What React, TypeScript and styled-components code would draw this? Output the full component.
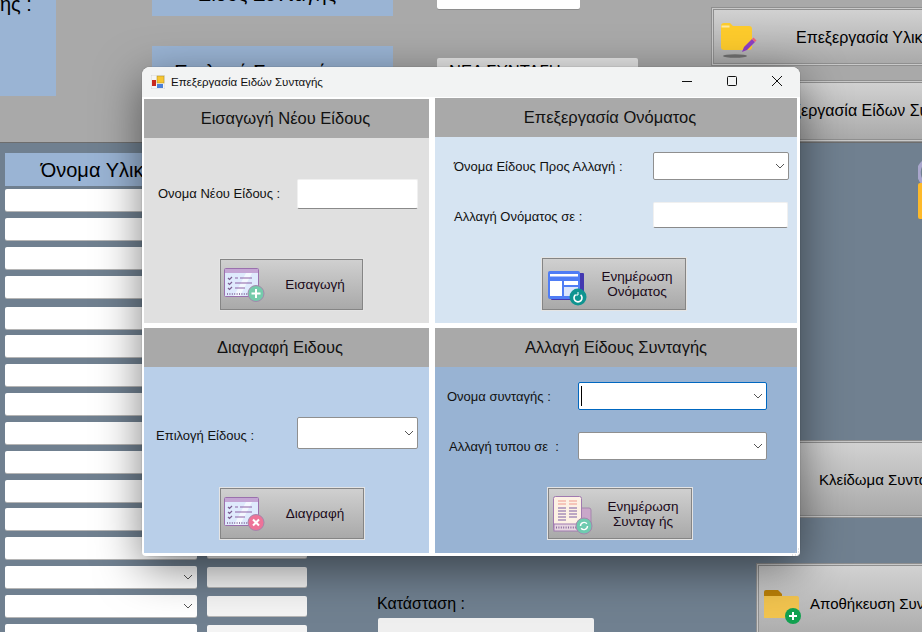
import React from 'react';
import styled, { createGlobalStyle } from 'styled-components';

const GlobalStyle = createGlobalStyle`
  * {
    box-sizing: border-box;
  }
  html,
  body {
    margin: 0;
    padding: 0;
    background: #708090;
    font-family: 'Liberation Sans', Arial, sans-serif;
    overflow: hidden;
  }
`;

const Page = styled.div`
  position: relative;
  width: 922px;
  height: 632px;
  overflow: hidden;
  background: #708090;
  color: #000;
`;

/* form behind the dialog */

const TopBand = styled.div`
  display: flex;
  height: 143px;
  background: #a9a9a9;
  border-bottom: 1px solid #6d6d6d;
`;

const NoteBlock = styled.div`
  flex: none;
  width: 56px;
  height: 96px;
  background: #9ab4d4;
  font-size: 20px;
  line-height: 23px;
  white-space: nowrap;
`;

const NoteText = styled.div`
  margin-top: -7px;
`;

const TitleColumn = styled.div`
  flex: none;
  display: flex;
  flex-direction: column;
  gap: 30px;
  width: 241px;
  margin-left: 96px;
`;

const TitleBlock = styled.div<{ $height: number; $pull: number }>`
  height: ${(p) => p.$height}px;
  padding-right: ${(p) => p.$pull}px;
  overflow: hidden;
  background: #9ab4d4;
  font-size: 20px;
  line-height: 23px;
  text-align: center;
`;

const TitleText = styled.div<{ $offset: number }>`
  margin-top: ${(p) => p.$offset}px;
`;

const InputColumn = styled.div`
  flex: none;
  display: flex;
  flex-direction: column;
  width: 201px;
  margin-left: 44px;
`;

const TopInput = styled.div`
  width: 143px;
  height: 9px;
  background: #fff;
  border-radius: 0 0 2px 2px;
  box-shadow: 0 1px 0 #8e8e8e;
`;

const TopSelect = styled.div`
  height: 30px;
  margin-top: 49px;
  padding: 3px 12px;
  font-size: 16.5px;
  line-height: 20px;
  white-space: nowrap;
  background: #e6e6e6;
  border-radius: 2px;
`;

const ButtonColumn = styled.div`
  flex: none;
  display: flex;
  flex-direction: column;
  gap: 16px;
  margin-left: 74px;
  padding-top: 8px;
`;

const FormButton = styled.div<{
  $width: number;
  $height: number;
  $indent: number;
  $size?: number;
  $textDrop?: number;
}>`
  flex: none;
  display: flex;
  align-items: center;
  position: relative;
  width: ${(p) => p.$width}px;
  height: ${(p) => p.$height}px;
  padding-left: ${(p) => p.$indent}px;
  padding-top: ${(p) => p.$textDrop ?? 0}px;
  font-size: ${(p) => p.$size ?? 15}px;
  white-space: nowrap;
  background: linear-gradient(#d2d2d2, #a9a9a9);
  border: 1px solid #c9c9c9;
  box-shadow: inset 0 0 0 1px #8f8f8f, 0 0 0 1px #8f8f8f;
`;

const FormButtonIcon = styled.svg<{ $left: number; $top: number }>`
  position: absolute;
  left: ${(p) => p.$left}px;
  top: ${(p) => p.$top}px;
`;

const LowerArea = styled.div`
  display: flex;
  height: 489px;
`;

const ListColumn = styled.div`
  flex: none;
  width: 307px;
  padding: 10px 0 0 5px;
`;

const ListHead = styled.div`
  display: flex;
  gap: 10px;
  height: 33px;
  margin-bottom: 3px;
`;

const HeadCell = styled.div<{ $width: number }>`
  width: ${(p) => p.$width}px;
  padding-left: 4px;
  background: #9ab4d4;
  font-size: 20px;
  line-height: 34px;
  text-align: center;
  white-space: nowrap;
  overflow: hidden;
`;

const ListRow = styled.div<{ $gap: number }>`
  display: flex;
  gap: 10px;
  height: 22px;
  margin-top: ${(p) => p.$gap}px;
`;

const NameField = styled.div`
  display: flex;
  align-items: center;
  justify-content: flex-end;
  width: 192px;
  padding-right: 4px;
  background: #fff;
  border-radius: 2px;
  box-shadow: 0 1px 0 #b5b5b5;
`;

const QuantityField = styled.div`
  width: 100px;
  height: 20px;
  margin-top: 1px;
  background: #f4f4f4;
  border-radius: 2px;
  box-shadow: 0 1px 0 #b5b5b5;
`;

const StatusColumn = styled.div`
  flex: none;
  width: 216px;
  margin-left: 71px;
  padding-top: 452px;
`;

const StatusLabel = styled.div`
  margin-left: -1px;
  font-size: 16px;
  line-height: 18px;
  white-space: nowrap;
`;

const StatusField = styled.div`
  height: 40px;
  margin-top: 5px;
  background: #efefef;
  border-radius: 2px 2px 0 0;
`;

const RightColumn = styled.div`
  flex: none;
  margin-left: 118px;
  padding-top: 18px;
`;

const LockIcon = styled.svg`
  display: block;
  margin-left: 206px;
`;

const SaveSpacer = styled.div`
  height: 47px;
`;

const ShiftedButton = styled.div`
  margin: 220px 0 0 0;
`;

const SaveButtonSlot = styled.div`
  margin-left: 45px;
`;

/* dialog */

const Dialog = styled.div`
  position: absolute;
  left: 142px;
  top: 67px;
  width: 658px;
  height: 489px;
  background: #fff;
  border-radius: 8px 8px 4px 4px;
  overflow: hidden;
`;

const DialogShadow = styled.div`
  position: absolute;
  left: 142px;
  top: 67px;
  width: 658px;
  height: 489px;
  border-radius: 8px;
  box-shadow: 0 12px 46px rgba(0, 0, 0, 0.5), 0 0 1px rgba(0, 0, 0, 0.5);
`;

const TitleBar = styled.div`
  display: flex;
  align-items: center;
  height: 30px;
  padding-left: 9px;
  background: #f2f3f3;
`;

const AppIcon = styled.svg`
  flex: none;
  margin-right: 6px;
`;

const WindowTitle = styled.div`
  flex: 1;
  font-size: 11.5px;
  color: #111;
`;

const WindowButton = styled.svg`
  flex: none;
  display: block;
`;

const WindowButtons = styled.div`
  display: flex;
  gap: 35px;
  margin-bottom: 2px;
  padding-right: 18px;
`;

const PanelGrid = styled.div`
  display: grid;
  grid-template-columns: 285px 362px;
  grid-template-rows: 225px 225px;
  column-gap: 6px;
  row-gap: 5px;
  padding: 1px 0 0 2px;
`;

const Panel = styled.section<{ $bg: string; $drop?: boolean }>`
  background: ${(p) => p.$bg};
  margin-top: ${(p) => (p.$drop ? 1 : 0)}px;
`;

const PanelTitle = styled.h2<{ $pull?: number }>`
  height: 39px;
  margin: 0;
  padding-right: ${(p) => p.$pull ?? 0}px;
  background: #a9a9a9;
  font-size: 16.5px;
  font-weight: 400;
  line-height: 39px;
  text-align: center;
  color: #111;
`;

const FieldRow = styled.div<{ $top: number; $left: number }>`
  display: flex;
  align-items: center;
  margin-top: ${(p) => p.$top}px;
  padding-left: ${(p) => p.$left}px;
`;

const FieldLabel = styled.label<{ $width: number; $shift?: number }>`
  flex: none;
  width: ${(p) => p.$width}px;
  margin-top: ${(p) => p.$shift ?? 0}px;
  font-size: 13px;
  color: #111;
  white-space: pre;
`;

const TextBox = styled.div<{ $width: number; $height: number }>`
  width: ${(p) => p.$width}px;
  height: ${(p) => p.$height}px;
  background: #fff;
  border: 1px solid #f0f0f0;
  border-bottom: 1px solid #8a8a8a;
  border-radius: 2px;
`;

const ComboBox = styled.div<{ $width: number; $height: number; $focused?: boolean }>`
  display: flex;
  align-items: center;
  justify-content: space-between;
  width: ${(p) => p.$width}px;
  height: ${(p) => p.$height}px;
  padding: 0 3px 0 2px;
  background: #fff;
  border: 1px solid ${(p) => (p.$focused ? '#0067c0' : '#8f8f8f')};
  border-radius: 2px;
`;

const Caret = styled.div`
  width: 1px;
  height: 20px;
  background: #000;
`;

const Chevron = styled.svg`
  display: block;
  margin-left: auto;
`;

const ActionButton = styled.button<{ $top: number; $left: number; $width?: number; $height?: number }>`
  display: grid;
  grid-template-columns: 44px 100px;
  align-items: center;
  width: ${(p) => p.$width ?? 144}px;
  height: ${(p) => p.$height ?? 51}px;
  margin: ${(p) => p.$top}px 0 0 ${(p) => p.$left}px;
  padding: 0;
  background: linear-gradient(#d0d0d0, #a9a9a9);
  border: 1px solid #858585;
  box-shadow: 0 0 0 1px #e4e4e4;
  font-family: inherit;
  font-size: 13.5px;
  line-height: 15px;
  color: #1a0a1a;
`;

const ActionIcon = styled.svg`
  display: block;
`;

const ActionText = styled.span`
  text-align: center;
  white-space: nowrap;
`;

const GripDots = styled.svg`
  position: absolute;
  right: 0;
  bottom: 0;
`;

const RowChevron = () => (
  <Chevron width="10" height="6" viewBox="0 0 10 6">
    <path d="M1 1l4 4 4-4" fill="none" stroke="#555" strokeWidth="1" />
  </Chevron>
);

const Checklist = ({ badge, cross }: { badge: string; cross?: boolean }) => (
  <ActionIcon width="44" height="49" viewBox="1 1 44 49">
    <rect x="4.5" y="9.5" width="34" height="28" rx="1" fill="#dfeafd" stroke="#9a70ad" />
    <path d="M14 37l12-23h6L20 37zM26 37l11-21" fill="#f4f8ff" stroke="none" />
    <rect x="5" y="10" width="33" height="4" fill="#c4a6d4" />
    <path d="M8 19l1.5 1.5L12 18M8 24l1.5 1.5L12 23M8 29l1.5 1.5L12 28" fill="none" stroke="#7d5f94" strokeWidth="1.2" />
    <path d="M15 19h3M20 19h12M15 24h17M15 29h10" stroke="#8d62a5" strokeWidth="1.2" />
    <path d="M7 35h24" stroke="#7d5f94" strokeDasharray="1 1.4" strokeWidth="1.4" />
    <circle cx="36" cy="34.5" r="8" fill={badge} stroke="#a487ac" />
    {cross ? (
      <path d="M33 31.5l6 6M39 31.5l-6 6" stroke="#fff" strokeWidth="2" />
    ) : (
      <path d="M36 30v9M31.5 34.5h9" stroke="#fff" strokeWidth="2" />
    )}
  </ActionIcon>
);

const LayoutRefresh = () => (
  <ActionIcon width="44" height="49" viewBox="1 1 44 49">
    <rect x="9" y="14" width="33" height="27" rx="1" fill="#4338b0" />
    <rect x="6" y="12" width="32" height="28" rx="2" fill="#4f7df5" />
    <rect x="8" y="15" width="28" height="2.5" fill="#fff" />
    <rect x="8" y="22" width="12" height="15" fill="#fff" />
    <rect x="22" y="22" width="14" height="4" fill="#fff" />
    <rect x="22" y="28" width="14" height="9" fill="#dbe5fb" />
    <circle cx="36" cy="38" r="8.5" fill="#0f9490" />
    <path d="M33.4 35.8a4 4 0 1 0 5.2 0" fill="none" stroke="#fff" strokeWidth="1.6" />
    <path d="M36 33v3h-3" fill="none" stroke="#fff" strokeWidth="1" />
  </ActionIcon>
);

const RecipeRefresh = () => (
  <ActionIcon width="44" height="49" viewBox="1 1 44 49">
    <rect x="32" y="20" width="11" height="23" rx="2" fill="#c9a7c9" stroke="#a487ac" />
    <rect x="5.5" y="8.5" width="28" height="34" rx="2" fill="#fdf1e4" stroke="#a07ab0" />
    <path d="M10 13h8M21 13h8M10 16h8M21 16h8" stroke="#ef9a8f" />
    <path d="M10 20h8M21 20h8M10 23h8M21 23h8M10 26h8M21 26h8M10 29h8M21 29h8M10 32h8" stroke="#7d5ea4" strokeWidth="1.2" />
    <rect x="6" y="36" width="27" height="7" fill="#e6d5e0" stroke="#a07ab0" />
    <path d="M8 39.5h22" stroke="#8a6a9e" strokeDasharray="1 1.4" strokeWidth="2" />
    <circle cx="36" cy="38" r="8" fill="#6fcbb0" stroke="#a487ac" />
    <path d="M32.5 38a3.6 3.6 0 0 1 6.4-2.2M39.5 38a3.6 3.6 0 0 1-6.4 2.2" fill="none" stroke="#fff" strokeWidth="1.4" />
  </ActionIcon>
);

const rowGaps = [0, 7, 7, 7, 9, 6, 7, 7, 7, 7, 7, 6, 7, 7, 7, 7];
const selectRows = [13, 14];

const App = () => {
  return (
    <Page>
      <GlobalStyle />
      <TopBand>
        <NoteBlock>
          <NoteText>ής :</NoteText>
        </NoteBlock>
        <TitleColumn>
          <TitleBlock $height={16} $pull={11}>
            <TitleText $offset={-17}>Είδος Συνταγής</TitleText>
          </TitleBlock>
          <TitleBlock $height={96} $pull={34}>
            <TitleText $offset={15}>Επιλογή Συνταγής</TitleText>
          </TitleBlock>
        </TitleColumn>
        <InputColumn>
          <TopInput />
          <TopSelect>ΝΕΑ ΣΥΝΤΑΓΗ</TopSelect>
        </InputColumn>
        <ButtonColumn>
          <FormButton $width={260} $height={57} $indent={83} $size={16} $textDrop={2}>
            <FormButtonIcon $left={5} $top={11} width="40" height="40" viewBox="0 0 40 40">
              <path d="M3 6a3 3 0 0 1 3-3h6l3 3h16a3 3 0 0 1 3 3v18a3 3 0 0 1-3 3H6a3 3 0 0 1-3-3z" fill="#fdcb2c" />
              <path d="M3.5 5.5h8v2h-8z" fill="#ffe9a0" />
              <path d="M24 32l2-5 8-8 3 3-8 8z" fill="#8d3fc4" />
              <path d="M34 19l1.5-1.5 3 3L37 22z" fill="#f0627a" />
              <ellipse cx="17" cy="36" rx="12" ry="1.8" fill="#6f6f6f" />
            </FormButtonIcon>
            Επεξεργασία Υλικών
          </FormButton>
          <FormButton $width={260} $height={60} $indent={52} $size={16}>
            Επεξεργασία Είδων Συνταγής
          </FormButton>
        </ButtonColumn>
      </TopBand>
      <LowerArea>
        <ListColumn>
          <ListHead>
            <HeadCell $width={192}>Όνομα Υλικού</HeadCell>
            <HeadCell $width={100} />
          </ListHead>
          {rowGaps.map((gap, index) => (
            <ListRow key={index} $gap={gap}>
              <NameField>{selectRows.includes(index) && <RowChevron />}</NameField>
              <QuantityField />
            </ListRow>
          ))}
        </ListColumn>
        <StatusColumn>
          <StatusLabel>Κατάσταση :</StatusLabel>
          <StatusField />
        </StatusColumn>
        <RightColumn>
          <LockIcon width="10" height="60" viewBox="0 0 10 60">
            <path d="M8 0C3 2 0 7 1 14c.6 4 3 7 5 9" fill="none" stroke="#a9a6cc" strokeWidth="4" />
            <rect x="0" y="22" width="24" height="36" rx="2" fill="#fdb92a" />
          </LockIcon>
          <ShiftedButton>
            <FormButton $width={354} $height={76} $indent={106}>
              Κλείδωμα Συνταγής
            </FormButton>
          </ShiftedButton>
          <SaveSpacer />
          <SaveButtonSlot>
            <FormButton $width={260} $height={78} $indent={52}>
              <FormButtonIcon $left={5} $top={23} width="46" height="40" viewBox="0 0 46 40">
                <path d="M1 4a2 2 0 0 1 2-2h12l4 4v24H1z" fill="#b97f08" />
                <path d="M1 8h33a2 2 0 0 1 2 2v20H1z" fill="#f2c44f" />
                <circle cx="30" cy="28" r="8" fill="#12a150" />
                <path d="M30 24v8M26 28h8" stroke="#fff" strokeWidth="2" />
              </FormButtonIcon>
              Αποθήκευση Συνταγής
            </FormButton>
          </SaveButtonSlot>
        </RightColumn>
      </LowerArea>

      <DialogShadow />
      <Dialog>
        <TitleBar>
          <AppIcon width="14" height="14" viewBox="0 0 14 14">
            <rect x="0" y="0" width="14" height="14" fill="#f5f5f5" stroke="#bbb" strokeWidth="0.5" />
            <rect x="6" y="1" width="7" height="7" fill="#f7c531" stroke="#a88a20" strokeWidth="0.5" />
            <rect x="1" y="5" width="4" height="6" fill="#c8281e" />
            <rect x="6" y="9" width="6" height="4" fill="#4a7fd8" />
          </AppIcon>
          <WindowTitle>Επεξεργασία Ειδών Συνταγής</WindowTitle>
          <WindowButtons>
            <WindowButton width="10" height="10" viewBox="0 0 10 10">
              <path d="M0 5.5h10" stroke="#111" />
            </WindowButton>
            <WindowButton width="10" height="10" viewBox="0 0 10 10">
              <rect x="0.5" y="0.5" width="9" height="9" rx="1" fill="none" stroke="#111" />
            </WindowButton>
            <WindowButton width="10" height="10" viewBox="0 0 10 10">
              <path d="M0 0l10 10M10 0L0 10" stroke="#111" />
            </WindowButton>
          </WindowButtons>
        </TitleBar>
        <PanelGrid>
          <Panel $bg="#e0e0e0" $drop>
            <PanelTitle $pull={2}>Εισαγωγή Νέου Είδους</PanelTitle>
            <FieldRow $top={41} $left={14}>
              <FieldLabel $width={139} $shift={-2}>
                Ονομα Νέου Είδους :
              </FieldLabel>
              <TextBox $width={121} $height={30} />
            </FieldRow>
            <ActionButton $top={50} $left={76} $width={143}>
              <Checklist badge="#74cbab" />
              <ActionText>Εισαγωγή</ActionText>
            </ActionButton>
          </Panel>
          <Panel $bg="#d6e4f2">
            <PanelTitle $pull={12}>Επεξεργασία Ονόματος</PanelTitle>
            <FieldRow $top={15} $left={19}>
              <FieldLabel $width={199}>Όνομα Είδους Προς Αλλαγή :</FieldLabel>
              <ComboBox $width={136} $height={28}>
                <RowChevron />
              </ComboBox>
            </FieldRow>
            <FieldRow $top={22} $left={19}>
              <FieldLabel $width={199} $shift={2}>
                Αλλαγή Ονόματος σε :
              </FieldLabel>
              <TextBox $width={135} $height={26} />
            </FieldRow>
            <ActionButton $top={30} $left={107} $height={52}>
              <LayoutRefresh />
              <ActionText>
                Ενημέρωση
                <br />
                Ονόματος
              </ActionText>
            </ActionButton>
          </Panel>
          <Panel $bg="#b9cfe9">
            <PanelTitle $pull={13}>Διαγραφή Ειδους</PanelTitle>
            <FieldRow $top={50} $left={12}>
              <FieldLabel $width={141} $shift={4}>
                Επιλογή Είδους :
              </FieldLabel>
              <ComboBox $width={121} $height={32}>
                <RowChevron />
              </ComboBox>
            </FieldRow>
            <ActionButton $top={39} $left={76}>
              <Checklist badge="#ee7398" cross />
              <ActionText>Διαγραφή</ActionText>
            </ActionButton>
          </Panel>
          <Panel $bg="#98b3d3">
            <PanelTitle>Αλλαγή Είδους Συνταγής</PanelTitle>
            <FieldRow $top={15} $left={12}>
              <FieldLabel $width={131}>Ονομα συνταγής :</FieldLabel>
              <ComboBox $width={189} $height={28} $focused>
                <Caret />
                <RowChevron />
              </ComboBox>
            </FieldRow>
            <FieldRow $top={22} $left={14}>
              <FieldLabel $width={129}>{'Αλλαγή τυπου σε  :'}</FieldLabel>
              <ComboBox $width={189} $height={28}>
                <RowChevron />
              </ComboBox>
            </FieldRow>
            <ActionButton $top={28} $left={113}>
              <RecipeRefresh />
              <ActionText>
                Ενημέρωση
                <br />
                Συνταγ ής
              </ActionText>
            </ActionButton>
          </Panel>
        </PanelGrid>
        <GripDots width="8" height="8" viewBox="0 0 8 8">
          <path d="M6 1h1M6 4h1M3 4h1M6 7h1M3 7h1M0 7h1" stroke="#c8c8c8" />
        </GripDots>
      </Dialog>
    </Page>
  );
};

export default App;
